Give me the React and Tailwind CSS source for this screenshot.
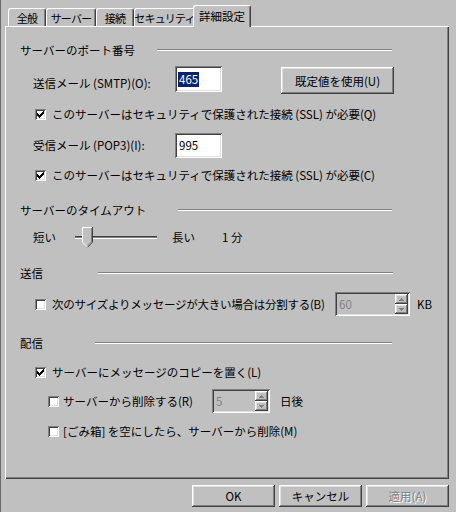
import React from "react";

const RAISED =
  "shadow-[inset_-1px_-1px_#404040,inset_1px_1px_#ffffff,inset_-2px_-2px_#808080,inset_2px_2px_#dfdfdf]";
const SUNKEN =
  "shadow-[inset_1px_1px_#808080,inset_-1px_-1px_#ffffff,inset_2px_2px_#404040,inset_-2px_-2px_#dfdfdf]";

const tabs = [
  { label: "全般", w: "w-[38px]" },
  { label: "サーバー", w: "w-[50px]" },
  { label: "接続", w: "w-[38px]" },
  { label: "セキュリティ", w: "w-[61px]" },
];

const CheckBox = ({ checked }) => (
  <span
    className={`w-[11px] h-[11px] shrink-0 bg-white flex items-center justify-center ${SUNKEN}`}
  >
    {checked && (
      <svg width="7" height="7" viewBox="0 0 7 7" shapeRendering="crispEdges">
        <rect x="6" y="0" width="1" height="1" fill="#000" />
        <rect x="5" y="1" width="2" height="1" fill="#000" />
        <rect x="0" y="2" width="1" height="1" fill="#000" />
        <rect x="4" y="2" width="3" height="1" fill="#000" />
        <rect x="0" y="3" width="2" height="1" fill="#000" />
        <rect x="3" y="3" width="3" height="1" fill="#000" />
        <rect x="0" y="4" width="5" height="1" fill="#000" />
        <rect x="1" y="5" width="3" height="1" fill="#000" />
        <rect x="2" y="6" width="1" height="1" fill="#000" />
      </svg>
    )}
  </span>
);

const Group = ({ title, titleW, lineW, className }) => (
  <div className={`h-[20px] flex items-center pl-[15px] ${className}`}>
    <span className={`${titleW} shrink-0 leading-[14px] whitespace-nowrap`}>{title}</span>
    <span
      className={`${lineW} h-[2px] border-t border-t-[#808080] border-b border-b-white`}
    />
  </div>
);

const Arrow = ({ down }) => (
  <svg width="5" height="3" viewBox="0 0 5 3" shapeRendering="crispEdges">
    <path d={down ? "M0 0H5L2.5 3Z" : "M2.5 0L5 3H0Z"} fill="#808080" />
  </svg>
);

// disabled numeric up/down box
const Spin = ({ value, w }) => (
  <div className={`${w} h-[24px] shrink-0 flex p-[2px] bg-[#c0c0c0] ${SUNKEN}`}>
    <span className="flex-1 pl-[2px] leading-[20px] text-[#808080]">{value}</span>
    <div className="w-[13px] flex flex-col">
      <div className={`flex-1 flex items-center justify-center ${RAISED}`}>
        <Arrow />
      </div>
      <div className={`flex-1 flex items-center justify-center ${RAISED}`}>
        <Arrow down />
      </div>
    </div>
  </div>
);

const Thumb = () => (
  <svg width="11" height="21" viewBox="0 0 11 21" className="absolute left-[7px] top-0">
    <path d="M0 0H11V15L5.5 20.5L0 15Z" fill="#c0c0c0" />
    <path d="M0.5 15V0.5H10" stroke="#ffffff" fill="none" />
    <path d="M10.5 0V15.2L5.5 20.3" stroke="#404040" fill="none" />
    <path d="M9.5 1.5V14.8L5.5 18.8" stroke="#808080" fill="none" />
    <path d="M0.5 15.2L5 19.7" stroke="#ffffff" fill="none" />
  </svg>
);

export default function App() {
  return (
    <div className="w-[456px] h-[512px] overflow-hidden bg-[#c0c0c0] pt-[5px] text-[11.5px] text-black font-['Noto_Sans_CJK_JP',sans-serif] shadow-[inset_1px_0_#6b6b6b]">
      {/* tab strip */}
      <div className="relative z-10 flex items-end h-[21px] pl-[8px]">
        {tabs.map((t) => (
          <div
            key={t.label}
            className={`${t.w} h-[18px] flex items-center justify-center whitespace-nowrap text-[11px] tracking-[-0.8px] leading-[14px] rounded-t-[3px] border-t border-l border-white border-r border-r-[#404040] shadow-[inset_-1px_0_#808080]`}
          >
            {t.label}
          </div>
        ))}
        <div className="-ml-[2px] w-[58px] h-[22px] -mb-[1px] pb-[2px] flex items-center justify-center whitespace-nowrap leading-[14px] bg-[#c0c0c0] rounded-t-[3px] border-t border-l border-white border-r border-r-[#404040] shadow-[inset_-1px_0_#808080]">
          詳細設定
        </div>
      </div>

      {/* panel */}
      <div className="ml-[5px] w-[444px] h-[453px] pt-[14px] shadow-[inset_1px_1px_#ffffff,inset_-1px_-1px_#404040,inset_-2px_-2px_#808080]">
        <Group title="サーバーのポート番号" titleW="w-[137px]" lineW="w-[235px]" />

        <div className="mt-[6px] h-[27px] flex items-start pl-[28px]">
          <span className="w-[142px] pt-[10px] leading-[14px] whitespace-nowrap">送信メール (SMTP)(O):</span>
          <div className={`w-[47px] h-[26px] px-[3px] flex items-center bg-white ${SUNKEN}`}>
            <span className="px-[1px] leading-[15px] bg-[#0a246a] text-white">465</span>
          </div>
          <button
            className={`ml-[59px] mt-[1px] w-[113px] h-[27px] leading-[14px] ${RAISED}`}
          >
            既定値を使用(U)
          </button>
        </div>

        <div className="mt-[11px] h-[20px] flex items-center pl-[30px]">
          <CheckBox checked />
          <span className="ml-[6px] leading-[14px] whitespace-nowrap">
            このサーバーはセキュリティで保護された接続 (SSL) が必要(Q)
          </span>
        </div>

        <div className="mt-[8px] h-[26px] flex items-center pl-[28px]">
          <span className="w-[142px] leading-[14px] whitespace-nowrap">受信メール (POP3)(I):</span>
          <div className={`w-[47px] h-[25px] px-[4px] flex items-center bg-white ${SUNKEN}`}>
            <span className="leading-[15px]">995</span>
          </div>
        </div>

        <div className="mt-[7px] h-[20px] flex items-center pl-[30px]">
          <CheckBox checked />
          <span className="ml-[6px] leading-[14px] whitespace-nowrap">
            このサーバーはセキュリティで保護された接続 (SSL) が必要(C)
          </span>
        </div>

        <Group
          title="サーバーのタイムアウト"
          titleW="w-[158px]"
          lineW="w-[214px]"
          className="mt-[15px]"
        />

        <div className="mt-[7px] h-[20px] flex items-center pl-[28px]">
          <span className="w-[42px] leading-[14px]">短い</span>
          <div className="relative w-[82px] h-[20px] flex items-center">
            <div className="w-full h-[3px] border-t border-t-[#404040] border-b border-b-white bg-[#808080]" />
            <Thumb />
          </div>
          <span className="ml-[15px] w-[50px] leading-[14px]">長い</span>
          <span className="leading-[14px]">1 分</span>
        </div>

        <Group title="送信" titleW="w-[78px]" lineW="w-[295px]" className="mt-[16px]" />

        <div className="mt-[9px] h-[24px] flex items-center pl-[30px]">
          <CheckBox />
          <span className="ml-[6px] w-[283px] shrink-0 leading-[14px] whitespace-nowrap tracking-[-0.25px]">
            次のサイズよりメッセージが大きい場合は分割する(B)
          </span>
          <Spin value="60" w="w-[75px]" />
          <span className="ml-[7px] leading-[14px]">KB</span>
        </div>

        <Group title="配信" titleW="w-[75px]" lineW="w-[297px]" className="mt-[17px]" />

        <div className="mt-[9px] h-[20px] flex items-center pl-[30px]">
          <CheckBox checked />
          <span className="ml-[6px] leading-[14px] whitespace-nowrap">
            サーバーにメッセージのコピーを置く(L)
          </span>
        </div>

        <div className="mt-[7px] h-[24px] flex items-center pl-[43px]">
          <CheckBox />
          <span className="ml-[4px] w-[149px] shrink-0 leading-[14px] whitespace-nowrap">サーバーから削除する(R)</span>
          <Spin value="5" w="w-[58px]" />
          <span className="ml-[10px] leading-[14px]">日後</span>
        </div>

        <div className="mt-[8px] h-[20px] flex items-center pl-[43px]">
          <CheckBox />
          <span className="ml-[4px] leading-[14px] whitespace-nowrap">
            [ごみ箱] を空にしたら、サーバーから削除(M)
          </span>
        </div>
      </div>

      {/* dialog buttons */}
      <div className="mt-[6px] flex justify-end gap-[4px] pr-[7px]">
        <button className={`w-[83px] h-[22px] leading-[14px] ${RAISED}`}>OK</button>
        <button className={`w-[83px] h-[22px] leading-[14px] ${RAISED}`}>キャンセル</button>
        <button
          className={`w-[83px] h-[22px] leading-[14px] text-[#808080] [text-shadow:1px_1px_#ffffff] ${RAISED}`}
        >
          適用(A)
        </button>
      </div>
    </div>
  );
}
